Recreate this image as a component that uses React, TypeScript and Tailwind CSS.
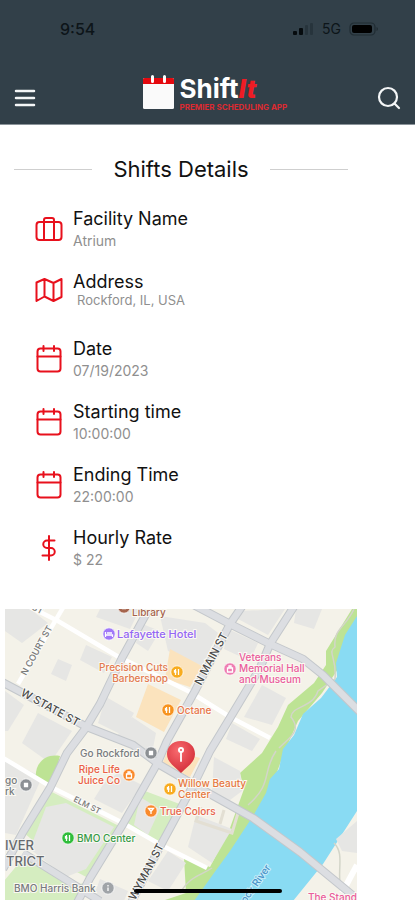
import type { ReactNode } from "react";

const FONT = "font-['Inter','Noto_Sans',sans-serif]";

function BriefcaseIcon() {
  return (
    <svg viewBox="0 0 28 28" className="h-7 w-7" fill="none" stroke="#e8101c" strokeWidth="2" strokeLinejoin="round">
      <rect x="1.5" y="7" width="25" height="18" rx="3" />
      <path d="M9 7V5a2 2 0 0 1 2-2h6a2 2 0 0 1 2 2v2M9 7v18M19 7v18" />
    </svg>
  );
}

function MapIcon() {
  return (
    <svg viewBox="0 0 28 28" className="h-7 w-7" fill="none" stroke="#e8101c" strokeWidth="2" strokeLinejoin="round">
      <path d="M1.500 8.500L9.500 5l9 4 8-4v18l-8 4-9-4.500-8 4.500zM9.500 5v17.500M18.500 9v18" />
    </svg>
  );
}

function CalendarIcon() {
  return (
    <svg viewBox="0 0 28 28" className="h-7 w-7" fill="none" stroke="#e8101c" strokeWidth="2" strokeLinecap="round" strokeLinejoin="round">
      <rect x="2.500" y="3.500" width="23" height="23" rx="3" />
      <path d="M2.500 11.500h23M8.500 1v5M19 1v5" />
    </svg>
  );
}

function DollarIcon() {
  return (
    <svg viewBox="0 0 28 28" className="h-7 w-7" fill="none" stroke="#e8101c" strokeWidth="2" strokeLinecap="round">
      <path d="M14 2v24M19.500 6.500H12a3.700 3.700 0 0 0 0 7.500h4a3.700 3.700 0 0 1 0 7.500H7.500" />
    </svg>
  );
}

function Row({ icon, title, children, tight = false }: { icon: ReactNode; title: string; children: ReactNode; tight?: boolean }) {
  return (
    <div className="flex items-center gap-2.5">
      <span className="w-7 shrink-0">{icon}</span>
      <div>
        <dt className="text-lg leading-6 text-[#111111]">{title}</dt>
        <dd className={tight ? "pl-1 text-[13px] leading-3 text-[#8f8f8f]" : "text-sm leading-5 text-[#8f8f8f]"}>{children}</dd>
      </div>
    </div>
  );
}

function Logo() {
  return (
    <div className="flex items-start gap-1.5">
      <svg viewBox="0 0 31 34" className="h-[34px] w-[31px] shrink-0" aria-hidden="true">
        <rect x="0" y="3" width="31" height="31" rx="1.5" fill="#fafafa" />
        <path d="M1.500 3h28a1.500 1.500 0 0 1 1.500 1.500V9H0V4.500A1.500 1.500 0 0 1 1.500 3z" fill="#e5090f" />
        <path d="M9.500 1.500v5M21.500 1.500v5" stroke="#fff" strokeWidth="3" strokeLinecap="round" />
      </svg>
      <div className="whitespace-nowrap">
        <div className="text-[26px] leading-7 font-bold text-white">
          Shift<span className="font-extrabold text-[#ee1c24] italic">It</span>
        </div>
        <div className="text-[8px] leading-2 font-bold text-[#dd2a31]">PREMIER SCHEDULING APP</div>
      </div>
    </div>
  );
}

const blocks = [
  "5,608 30,608 48,622 22,642 5,630",
  "58,658 72,664 66,680 51,673",
  "86,644 112,656 104,672 80,659",
  "100,608 140,608 130,628 96,616",
  "5,690 24,704 8,730 5,730",
  "38,712 72,730 50,762 22,742",
  "106,696 134,712 122,734 98,722",
  "160,615 205,622 218,632 202,665 168,650",
  "140,622 160,630 148,650 136,642",
  "240,610 285,608 268,634 238,618",
  "296,608 322,608 314,628 294,622",
  "228,628 258,642 250,660 224,648",
  "262,684 286,697 272,724 244,716",
  "232,722 260,738 252,750 226,738",
  "132,716 156,732 152,752 116,736",
  "5,758 42,776 16,834 5,832",
  "46,806 66,802 114,826 86,868 66,876 30,848",
  "104,782 118,772 142,784 122,812 94,798",
  "140,796 160,808 148,834 134,824",
  "214,756 240,770 242,790 226,802 212,790",
  "196,814 232,828 212,862 188,846",
  "168,850 186,862 168,890 148,880",
  "100,878 128,890 124,900 92,900",
  "336,838 357,820 357,852 342,850",
];

const grayRoads = [
  "M0 680L87 726L133 744L160 764L210 793L253 817L300 851L345 888L362 902",
  "M190 602L230 623L270 643L303 658L323 674L360 711",
  "M151 604L122 657L100 703L85 728L67 752L50 787L23 831L3 868",
  "M243 604L230 623L195 690L167 740L157 763L123 823L90 877L77 902",
  "M295 604L270 643L260 667L230 717L210 750L196 779L163 840L131 902",
  "M23 852L60 875L100 900",
];

const whiteRoads = [
  "M28 605L58 620L117 655L190 691L230 716L270 737",
  "M64 605L18 683",
  "M0 755L53 787L123 822L163 845L207 867",
];

function Poi({ x, y, color, glyph }: { x: number; y: number; color: string; glyph: string }) {
  return (
    <g>
      <circle cx={x} cy={y} r="6.200" fill={color} stroke="#fff" strokeWidth="0.8" />
      <path d={glyph} transform={`translate(${x} ${y})`} stroke="#fff" strokeWidth="1.300" fill="none" />
    </g>
  );
}

const BED = "M-3.500 -2V3M-3.500 1H3.500V3M-2 -1H3";
const FORK = "M-1.500 -3V3M1.500 -3V3M-2.500 -2V0H-0.500";
const BAG = "M-2.500 -1H2.500V3H-2.500ZM-1 -1V-3H1V-1";
const DOT = "M-1.500 -1.500H1.500V1.500H-1.500ZM-1 0H1";
const CUP = "M-2.500 -2.500H2.500L0 0.500ZM0 0V3";
const INFO = "M0 -3V-1.500M0 -0.500V3";

function CityMap() {
  return (
    <svg
      viewBox="5 608 352 292"
      preserveAspectRatio="xMinYMin slice"
      className="block h-[292px] w-full text-[10px] font-medium"
      role="img"
      aria-label="Map of Rockford"
    >
      <rect x="5" y="608" width="352" height="292" fill="#f4f2e9" />
      <path d="M50 790L121 826L90 880L70 886L24 856L4 880V900H75L90 878L60 862L24 832zM130 812L145 790L185 805L160 844L126 824z" fill="#d5edc0" />
      <path d="M352 608H357V640L338 668L322 692L298 720L284 752L270 790L254 820L222 872L204 900H162L186 892L184 857L210 866L230 827L244 788L240 772L262 752L278 726L288 704L314 682L326 664L326 650Z" fill="#bde394" />
      <path d="M357 615L345 634L336 662L337 676L321 697L303 713L294 734L283 748L279 768L270 778L266 792L253 815L230 850L214 872L194 900H293L323 863L357 810Z" fill="#89dbf3" />
      <g fill="#e6e6e4">
        {blocks.map((p) => (
          <polygon key={p} points={p} />
        ))}
      </g>
      <path d="M36 778C34 764 44 752 60 755L52 784z" fill="#bde394" />
      <path d="M170 648L202 665L190 686L165 678zM148 683L181 699L164 731L136 716zM168 748L200 757L190 776L162 764z" fill="#fbe3bd" />
      <g fill="none" stroke="#d3d5c9" strokeWidth="1.500">
        <path d="M354 608C346 626 333 628 335 646C327 652 337 656 335 678L318 690C312 708 292 704 291 716C302 730 290 736 279 747" />
        <path d="M276 750C262 770 273 783 248 804M334 842C344 852 338 866 340 882M180 892C190 875 200 875 212 867" />
        <path d="M201 806L196 820L232 832L238 812M224 809L220 823" stroke="#e3dfd3" strokeWidth="3" />
      </g>
      <g fill="none" stroke="#ffffff" strokeWidth="4.500">
        {whiteRoads.map((d) => (
          <path key={d} d={d} />
        ))}
        <path d="M342 892L357 864" strokeWidth="6" />
      </g>
      <g fill="none" stroke="#c3c7cb" strokeWidth="8.500" strokeLinejoin="round">
        {grayRoads.map((d) => (
          <path key={d} d={d} />
        ))}
      </g>
      <g fill="none" stroke="#dcdee2" strokeWidth="6.500" strokeLinejoin="round">
        {grayRoads.map((d) => (
          <path key={d} d={d} />
        ))}
      </g>

      <g fill="#4a4a4a" stroke="#fafaf6" strokeWidth="2" paintOrder="stroke">
        <text transform="translate(20 694) rotate(29)" fontSize="11">W STATE ST</text>
        <text transform="translate(201 685) rotate(-62)" fontSize="11">N MAIN ST</text>
        <text transform="translate(135 900) rotate(-62)" fontSize="11">WYMAN ST</text>
        <text transform="translate(26 675) rotate(-61)" fontSize="9" fill="#777">N COURT ST</text>
        <text transform="translate(73 800) rotate(27)" fontSize="8" fill="#777">ELM ST</text>
        <text transform="translate(31 608) rotate(28)" fontSize="9" fill="#777">ST</text>
      </g>
      <g fill="#666a6e" fontSize="13" stroke="#f3f3f0" strokeWidth="2" paintOrder="stroke">
        <text x="5" y="849">IVER</text>
        <text x="6" y="865">TRICT</text>
      </g>
      <text transform="translate(242 908) rotate(-55)" fill="#4a94c9" stroke="#c9eefa" strokeWidth="2" paintOrder="stroke">Rock River</text>

      <g stroke="#fbf9f3" strokeWidth="2" paintOrder="stroke">
        <text x="132" y="615" fill="#a5644c">Library</text>
        <text x="117" y="637" fontSize="11" fill="#9467f5">Lafayette Hotel</text>
        <g fill="#e27a50" textAnchor="end">
          <text x="168" y="670">Precision Cuts</text>
          <text x="168" y="681">Barbershop</text>
        </g>
        <text x="177" y="713" fill="#e8754a">Octane</text>
        <g fill="#ea5d9c">
          <text x="239" y="660">Veterans</text>
          <text x="239" y="671">Memorial Hall</text>
          <text x="239" y="682">and Museum</text>
        </g>
        <text x="80" y="756" fill="#777b7e">Go Rockford</text>
        <g fill="#ea6045" textAnchor="end">
          <text x="120" y="772">Ripe Life</text>
          <text x="120" y="783">Juice Co</text>
        </g>
        <g fill="#e6783f">
          <text x="178" y="786">Willow Beauty</text>
          <text x="178" y="797">Center</text>
        </g>
        <text x="160" y="814" fill="#e8644a">True Colors</text>
        <text x="77" y="841" fill="#379b48">BMO Center</text>
        <text x="14" y="891" fill="#777b7e">BMO Harris Bank</text>
        <text x="5" y="783" fill="#777b7e">go</text>
        <text x="5" y="794" fill="#777b7e">rk</text>
        <text x="308" y="900" fill="#ea5d9c">The Stand</text>
      </g>

      <Poi x={124} y={606} color="#a5644c" glyph={DOT} />
      <Poi x={109} y={633} color="#a078f8" glyph={BED} />
      <Poi x={177} y={671} color="#f8ac1f" glyph={FORK} />
      <Poi x={168} y={709} color="#f7931e" glyph={FORK} />
      <Poi x={230} y={668} color="#ee7db2" glyph={BAG} />
      <Poi x={151} y={752} color="#8c9094" glyph={DOT} />
      <Poi x={129} y={774} color="#f98a2c" glyph={BAG} />
      <Poi x={170} y={788} color="#f8ac1f" glyph={FORK} />
      <Poi x={151} y={810} color="#f98a2c" glyph={CUP} />
      <Poi x={68} y={837} color="#2fbd3a" glyph={FORK} />
      <Poi x={26} y={784} color="#8c9094" glyph={DOT} />
      <Poi x={108} y={887} color="#a0a4a8" glyph={INFO} />

      <defs>
        <radialGradient id="pin" cx="0.4" cy="0.3" r="0.8">
          <stop offset="0" stopColor="#f86a6e" />
          <stop offset="1" stopColor="#cf2733" />
        </radialGradient>
      </defs>
      <path d="M181 740C190 740 195 746 195 753C195 761 188 765 181 772C174 765 167 761 167 753C167 746 172 740 181 740z" fill="url(#pin)" />
      <path d="M181 750V760" stroke="#fff" strokeWidth="1.800" strokeLinecap="round" />
      <circle cx="181" cy="749" r="3" fill="#fff" />
      <circle cx="181" cy="749" r="1" fill="#e8505a" />
    </svg>
  );
}

export default function App() {
  return (
    <div className={`relative min-h-screen overflow-hidden bg-white ${FONT}`}>
      <header className="border-b border-[#8b949a] bg-[#324049] pb-3">
        <div className="flex items-center justify-between pt-[17px] pr-9 pl-[60px] text-[#0d1519]">
          <span className="text-base leading-6 font-medium">9:54</span>
          <div className="flex items-center gap-2">
            <svg viewBox="0 0 22 14" className="h-3.5 w-[22px]" aria-hidden="true">
              <rect x="1" y="9" width="4" height="4" rx="1" fill="#060b0e" />
              <rect x="7" y="6" width="4" height="7" rx="1" fill="#060b0e" />
              <rect x="13" y="3" width="3" height="10" rx="1" fill="#27343c" />
              <rect x="18" y="1" width="3" height="12" rx="1" fill="#27343c" />
            </svg>
            <span className="text-sm leading-6">5G</span>
            <svg viewBox="0 0 30 14" className="h-3.5 w-[30px]" aria-hidden="true">
              <rect x="1" y="1" width="25" height="12" rx="4" fill="none" stroke="#202c33" strokeWidth="1.200" />
              <rect x="3" y="3" width="20" height="8" rx="2" fill="#000" />
              <path d="M27.500 5v4q1.500-0.500 1.500-2t-1.500-2" fill="#202c33" />
            </svg>
          </div>
        </div>
        <div className="flex items-end justify-between px-3.5 pt-[34px]">
          <button type="button" aria-label="Menu" className="flex-1 pt-2 pb-1">
            <svg viewBox="0 0 22 20" className="h-5 w-[22px]" stroke="#f4f6f7" strokeWidth="2.500" strokeLinecap="round">
              <path d="M2 3h18M2 10h18M2 17h18" />
            </svg>
          </button>
          <div className="w-[130px] shrink-0 pb-px">
            <Logo />
          </div>
          <button type="button" aria-label="Search" className="flex flex-1 justify-end pt-2 pb-0.5">
            <svg viewBox="0 0 24 24" className="h-6 w-6" fill="none" stroke="#f4f6f7" strokeWidth="2.200" strokeLinecap="round">
              <circle cx="11" cy="11" r="9" />
              <path d="M17.500 17.500L22 22" />
            </svg>
          </button>
        </div>
      </header>

      <main>
        <div className="mr-[67px] ml-[14px] flex items-center gap-[21px] pt-7">
          <span className="h-px flex-1 bg-[#cfcfcf]" />
          <h1 className="text-[22px] leading-8 text-[#111111]">Shifts Details</h1>
          <span className="h-px flex-1 bg-[#cfcfcf]" />
        </div>

        <dl className="flex flex-col gap-[19px] pt-[22px] pl-[35px]">
          <Row icon={<BriefcaseIcon />} title="Facility Name">Atrium</Row>
          <div className="pb-3">
            <Row icon={<MapIcon />} title="Address" tight>Rockford, IL, USA</Row>
          </div>
          <Row icon={<CalendarIcon />} title="Date">07/19/2023</Row>
          <Row icon={<CalendarIcon />} title="Starting time">10:00:00</Row>
          <Row icon={<CalendarIcon />} title="Ending Time">22:00:00</Row>
          <Row icon={<DollarIcon />} title="Hourly Rate">$ 22</Row>
        </dl>

        <div className="relative mt-[39px] mr-[58px] ml-[5px]">
          <CityMap />
          <div className="absolute bottom-2 left-[129px] h-1 w-[148px] rounded-full bg-black" />
        </div>
      </main>
    </div>
  );
}
